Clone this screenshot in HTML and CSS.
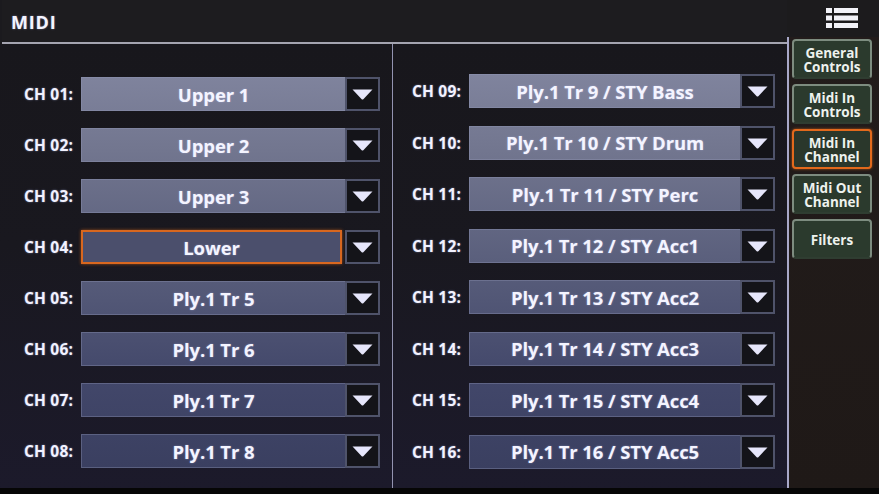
FILE: index.html
```html
<!DOCTYPE html>
<html lang="en">
<head>
<meta charset="utf-8">
<title>MIDI</title>
<link rel="stylesheet" href="styles.css">
</head>
<body>
<div class="screen">
  <div class="main">
    <header class="titlebar"><span class="title">MIDI</span></header>
    <div class="channels">
      <section class="col col-left">
        <div class="row"><span class="label">CH 01:</span><div class="dd"><div class="dd-value">Upper 1</div><div class="dd-arrow"><svg viewBox="0 0 21 11" width="21" height="11"><path d="M0.5 0.5 L20.5 0.5 L11.3 10.2 Q10.5 11 9.7 10.2 Z" fill="#e6e6fb"/></svg></div></div></div>
        <div class="row"><span class="label">CH 02:</span><div class="dd"><div class="dd-value">Upper 2</div><div class="dd-arrow"><svg viewBox="0 0 21 11" width="21" height="11"><path d="M0.5 0.5 L20.5 0.5 L11.3 10.2 Q10.5 11 9.7 10.2 Z" fill="#e6e6fb"/></svg></div></div></div>
        <div class="row"><span class="label">CH 03:</span><div class="dd"><div class="dd-value">Upper 3</div><div class="dd-arrow"><svg viewBox="0 0 21 11" width="21" height="11"><path d="M0.5 0.5 L20.5 0.5 L11.3 10.2 Q10.5 11 9.7 10.2 Z" fill="#e6e6fb"/></svg></div></div></div>
        <div class="row"><span class="label">CH 04:</span><div class="dd"><div class="dd-value focused">Lower</div><div class="dd-arrow"><svg viewBox="0 0 21 11" width="21" height="11"><path d="M0.5 0.5 L20.5 0.5 L11.3 10.2 Q10.5 11 9.7 10.2 Z" fill="#e6e6fb"/></svg></div></div></div>
        <div class="row"><span class="label">CH 05:</span><div class="dd"><div class="dd-value">Ply.1 Tr 5</div><div class="dd-arrow"><svg viewBox="0 0 21 11" width="21" height="11"><path d="M0.5 0.5 L20.5 0.5 L11.3 10.2 Q10.5 11 9.7 10.2 Z" fill="#e6e6fb"/></svg></div></div></div>
        <div class="row"><span class="label">CH 06:</span><div class="dd"><div class="dd-value">Ply.1 Tr 6</div><div class="dd-arrow"><svg viewBox="0 0 21 11" width="21" height="11"><path d="M0.5 0.5 L20.5 0.5 L11.3 10.2 Q10.5 11 9.7 10.2 Z" fill="#e6e6fb"/></svg></div></div></div>
        <div class="row"><span class="label">CH 07:</span><div class="dd"><div class="dd-value">Ply.1 Tr 7</div><div class="dd-arrow"><svg viewBox="0 0 21 11" width="21" height="11"><path d="M0.5 0.5 L20.5 0.5 L11.3 10.2 Q10.5 11 9.7 10.2 Z" fill="#e6e6fb"/></svg></div></div></div>
        <div class="row"><span class="label">CH 08:</span><div class="dd"><div class="dd-value">Ply.1 Tr 8</div><div class="dd-arrow"><svg viewBox="0 0 21 11" width="21" height="11"><path d="M0.5 0.5 L20.5 0.5 L11.3 10.2 Q10.5 11 9.7 10.2 Z" fill="#e6e6fb"/></svg></div></div></div>
      </section>
      <section class="col col-right">
        <div class="row"><span class="label">CH 09:</span><div class="dd"><div class="dd-value">Ply.1 Tr 9 / STY Bass</div><div class="dd-arrow"><svg viewBox="0 0 21 11" width="21" height="11"><path d="M0.5 0.5 L20.5 0.5 L11.3 10.2 Q10.5 11 9.7 10.2 Z" fill="#e6e6fb"/></svg></div></div></div>
        <div class="row"><span class="label">CH 10:</span><div class="dd"><div class="dd-value">Ply.1 Tr 10 / STY Drum</div><div class="dd-arrow"><svg viewBox="0 0 21 11" width="21" height="11"><path d="M0.5 0.5 L20.5 0.5 L11.3 10.2 Q10.5 11 9.7 10.2 Z" fill="#e6e6fb"/></svg></div></div></div>
        <div class="row"><span class="label">CH 11:</span><div class="dd"><div class="dd-value">Ply.1 Tr 11 / STY Perc</div><div class="dd-arrow"><svg viewBox="0 0 21 11" width="21" height="11"><path d="M0.5 0.5 L20.5 0.5 L11.3 10.2 Q10.5 11 9.7 10.2 Z" fill="#e6e6fb"/></svg></div></div></div>
        <div class="row"><span class="label">CH 12:</span><div class="dd"><div class="dd-value">Ply.1 Tr 12 / STY Acc1</div><div class="dd-arrow"><svg viewBox="0 0 21 11" width="21" height="11"><path d="M0.5 0.5 L20.5 0.5 L11.3 10.2 Q10.5 11 9.7 10.2 Z" fill="#e6e6fb"/></svg></div></div></div>
        <div class="row"><span class="label">CH 13:</span><div class="dd"><div class="dd-value">Ply.1 Tr 13 / STY Acc2</div><div class="dd-arrow"><svg viewBox="0 0 21 11" width="21" height="11"><path d="M0.5 0.5 L20.5 0.5 L11.3 10.2 Q10.5 11 9.7 10.2 Z" fill="#e6e6fb"/></svg></div></div></div>
        <div class="row"><span class="label">CH 14:</span><div class="dd"><div class="dd-value">Ply.1 Tr 14 / STY Acc3</div><div class="dd-arrow"><svg viewBox="0 0 21 11" width="21" height="11"><path d="M0.5 0.5 L20.5 0.5 L11.3 10.2 Q10.5 11 9.7 10.2 Z" fill="#e6e6fb"/></svg></div></div></div>
        <div class="row"><span class="label">CH 15:</span><div class="dd"><div class="dd-value">Ply.1 Tr 15 / STY Acc4</div><div class="dd-arrow"><svg viewBox="0 0 21 11" width="21" height="11"><path d="M0.5 0.5 L20.5 0.5 L11.3 10.2 Q10.5 11 9.7 10.2 Z" fill="#e6e6fb"/></svg></div></div></div>
        <div class="row"><span class="label">CH 16:</span><div class="dd"><div class="dd-value">Ply.1 Tr 16 / STY Acc5</div><div class="dd-arrow"><svg viewBox="0 0 21 11" width="21" height="11"><path d="M0.5 0.5 L20.5 0.5 L11.3 10.2 Q10.5 11 9.7 10.2 Z" fill="#e6e6fb"/></svg></div></div></div>
      </section>
    </div>
  </div>
  <aside class="sidebar">
    <div class="menu-area">
      <svg class="menu-icon" viewBox="0 0 32 20" width="32" height="20">
        <rect x="0" y="0" width="6" height="5" fill="#f2f2f8"/>
        <rect x="8" y="0" width="24" height="5" fill="#f2f2f8"/>
        <rect x="0" y="7.5" width="6" height="5" fill="#f2f2f8"/>
        <rect x="8" y="7.5" width="24" height="5" fill="#f2f2f8"/>
        <rect x="0" y="15" width="6" height="5" fill="#f2f2f8"/>
        <rect x="8" y="15" width="24" height="5" fill="#f2f2f8"/>
      </svg>
    </div>
    <nav class="tabs">
      <div class="tab"><span class="line">General</span><span class="line">Controls</span></div>
      <div class="tab"><span class="line">Midi In</span><span class="line">Controls</span></div>
      <div class="tab active"><span class="line">Midi In</span><span class="line">Channel</span></div>
      <div class="tab"><span class="line">Midi Out</span><span class="line">Channel</span></div>
      <div class="tab"><span class="line">Filters</span></div>
    </nav>
  </aside>
</div>
</body>
</html>
```

FILE: styles.css
```css
* { box-sizing: border-box; }

html, body {
  margin: 0;
  padding: 0;
  background: #060606;
}

body {
  width: 879px;
  height: 494px;
  overflow: hidden;
  font-family: "Open Sans", "Noto Sans", "Liberation Sans", sans-serif;
  font-weight: 700;
  color: #f0f0fb;
}

.screen {
  display: flex;
  height: 488px;
  background: #1b1a1e;
}

.main {
  width: 787px;
  display: flex;
  flex-direction: column;
}

.titlebar {
  height: 44px;
  flex: none;
  display: flex;
  align-items: center;
  padding: 2px 0 0 9px;
  background: #1d1c1f;
  border-bottom: 2px solid #a4a4b0;
  margin-left: 2px;
}

.title {
  font-size: 18px;
  letter-spacing: 0.8px;
  color: #f4f4ff;
  text-shadow: 0 0 2px rgba(200, 200, 255, 0.5);
}

.channels {
  flex: 1;
  display: flex;
  background: linear-gradient(to bottom, #18171c 0%, #19181f 45%, #1c1a2b 100%);
}

.col {
  display: flex;
  flex-direction: column;
  justify-content: space-between;
}

.col-left {
  width: 393px;
  padding: 33px 12px 20px 24px;
  border-right: 1px solid #9393b0;
}

.col-right {
  width: 394px;
  padding: 30px 12px 19px 19px;
}

.row {
  display: flex;
  align-items: center;
  gap: 5px;
  height: 34px;
}

.label {
  width: 52px;
  flex: none;
  font-size: 15.5px;
  letter-spacing: 0.2px;
  white-space: nowrap;
  color: #f2f2ff;
  text-shadow: 0 0 2px rgba(190, 200, 255, 0.55);
}

.dd {
  flex: 1;
  display: flex;
  height: 34px;
}

.dd-value {
  flex: 1;
  display: flex;
  align-items: center;
  justify-content: center;
  font-size: 18.5px;
  letter-spacing: -0.1px;
  white-space: nowrap;
  color: #f4f4ff;
  text-shadow: 0 0 2px rgba(200, 205, 255, 0.45);
  background: linear-gradient(to bottom, #8286a0 60px, #72768f 150px, #565b79 280px, #42476a 380px, #3a3f60 470px) fixed;
  border: 1px solid rgba(150, 155, 185, 0.35);
  border-right: none;
}

.dd-value.focused {
  border: 2px solid #d8671f;
  margin-right: 3px;
  background: #4b4f6c;
  box-shadow: 0 0 3px rgba(230, 110, 30, 0.6);
}

.dd-arrow {
  width: 35px;
  flex: none;
  display: flex;
  align-items: center;
  justify-content: center;
  background: #141419;
  border: 2px solid #4f536a;
  padding-top: 1px;
}

.sidebar {
  width: 92px;
  display: flex;
  flex-direction: column;
  background: #1f1a19;
}

.menu-area {
  height: 37px;
  flex: none;
  padding: 8px 0 0 39px;
  background: #1c1b1d;
}

.menu-icon { display: block; }

.tabs {
  flex: 1;
  display: flex;
  flex-direction: column;
  gap: 5px;
  padding: 2px 7px 0 3px;
  border-left: 2px solid #a8a8c8;
  background: linear-gradient(to bottom, #221c1b, #1f1917);
}

.tab {
  height: 40px;
  display: flex;
  flex-direction: column;
  align-items: center;
  justify-content: center;
  text-align: center;
  font-size: 13.5px;
  line-height: 14px;
  color: #eef2ee;
  background: #2b3a2d;
  border: 2px solid #7d8c7f;
  border-bottom-color: #2f3d31;
  border-radius: 4px;
  padding-top: 1px;
}

.line {
  display: block;
  height: 14px;
  white-space: nowrap;
}

.tab.active {
  border: 2px solid #e2691c;
  background: #2a372b;
  box-shadow: 0 0 3px rgba(230, 110, 30, 0.7);
}
```
